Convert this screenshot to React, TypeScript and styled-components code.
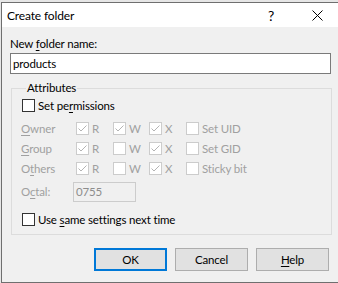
import React from "react";
import styled, { createGlobalStyle } from "styled-components";

const Global = createGlobalStyle`
  html, body {
    margin: 0;
    padding: 0;
    background: #e6e6e6;
    overflow: hidden;
  }
  body {
    width: 338px;
    height: 283px;
    font-family: Lato, "Noto Sans", sans-serif;
    font-size: 11.5px;
    letter-spacing: -0.15px;
    color: #000;
  }
`;

const Dialog = styled.div`
  display: flex;
  flex-direction: column;
  width: 338px;
  height: 279px;
  margin: 2px 0 0 1px;
  border: 1px solid #6f6f6f;
  background: #f0f0f0;
`;

const TitleBar = styled.div`
  display: flex;
  align-items: center;
  height: 24px;
  background: #fff;
  padding-left: 5px;
`;

const Title = styled.span`
  flex: 1;
  font-size: 12px;
`;

const CaptionButton = styled.span`
  width: 46px;
  height: 24px;
  display: flex;
  align-items: center;
  justify-content: center;
  font-size: 14px;
`;

const Body = styled.div`
  display: flex;
  flex-direction: column;
  padding: 9px 0 0 8px;
  width: 322px;
`;

const Label = styled.div`
  line-height: 16px;
  height: 16px;
`;

const TextInput = styled.div<{ $disabled?: boolean }>`
  box-sizing: border-box;
  height: 21px;
  border: 1px solid ${(p) => (p.$disabled ? "#cccccc" : "#7a7a7a")};
  background: ${(p) => (p.$disabled ? "#f0f0f0" : "#fff")};
  color: ${(p) => (p.$disabled ? "#8d8d8d" : "#000")};
  padding: 1px 2px;
  line-height: 17px;
`;

const NameInput = styled(TextInput)`
  margin-top: 1px;
  width: 321px;
`;

const Group = styled.fieldset`
  margin: 6px 0 0 1px;
  width: 321px;
  height: 155px;
  box-sizing: border-box;
  border: 1px solid #dcdcdc;
  padding: 0 0 0 9px;
  display: flex;
  flex-direction: column;
`;

const Legend = styled.legend`
  padding: 0 1px;
  margin-left: 5px;
  line-height: 16px;
`;

const CheckRow = styled.label`
  display: flex;
  align-items: center;
  gap: 3px;
  height: 16px;
  margin-left: 1px;
`;

const PermRow = styled(CheckRow)`
  margin-top: 1px;
`;

const Box = styled.span<{ $disabled?: boolean }>`
  box-sizing: border-box;
  width: 13px;
  height: 13px;
  border: 1px solid ${(p) => (p.$disabled ? "#cccccc" : "#333333")};
  background: #fff;
  display: inline-flex;
  align-items: center;
  justify-content: center;
  flex: none;
`;

const PermGrid = styled.div`
  display: grid;
  grid-template-columns: 55px 37px 36px 37px 1fr;
  grid-auto-rows: 20px;
  margin-top: 5px;
  color: #a0a0a0;
`;

const Cell = styled.div`
  display: flex;
  align-items: center;
  gap: 3px;
`;

const OctalRow = styled.div`
  display: flex;
  align-items: center;
  height: 21px;
  margin-top: 3px;
  color: #a0a0a0;
`;

const OctalLabel = styled.span`
  width: 52px;
`;

const OctalInput = styled(TextInput)`
  width: 63px;
  height: 20px;
  line-height: 16px;
`;

const SameRow = styled(CheckRow)`
  margin-top: 9px;
`;

const Buttons = styled.div`
  display: flex;
  gap: 8px;
  margin: 13px 0 0 84px;
`;

const Button = styled.div<{ $default?: boolean }>`
  box-sizing: border-box;
  width: 73px;
  height: 23px;
  background: #e1e1e1;
  border: ${(p) => (p.$default ? "2px solid #0078d7" : "1px solid #adadad")};
  display: flex;
  align-items: center;
  justify-content: center;
`;

const U = styled.span`
  text-decoration: underline;
  text-underline-offset: 2px;
`;

const Check: React.FC<{ checked?: boolean; disabled?: boolean }> = ({ checked, disabled }) => (
  <Box $disabled={disabled}>
    {checked && (
      <svg width="11" height="11" viewBox="0 0 11 11">
        <polyline points="1.5,5.5 4,8 9.5,2.5" fill="none" stroke={disabled ? "#b4b4b4" : "#333"} strokeWidth="1" />
      </svg>
    )}
  </Box>
);

const rows = [
  { name: <><U>O</U>wner</>, r: true, w: true, x: true, extra: "Set UID" },
  { name: <><U>G</U>roup</>, r: true, w: false, x: true, extra: "Set GID" },
  { name: <>O<U>t</U>hers</>, r: true, w: false, x: true, extra: "Sticky bit" },
];

export default function App() {
  return (
    <>
      <Global />
      <Dialog>
        <TitleBar>
          <Title>Create folder</Title>
          <CaptionButton>?</CaptionButton>
          <CaptionButton>
            <svg width="11" height="11" viewBox="0 0 11 11">
              <path d="M0.5 0.5 L10.5 10.5 M10.5 0.5 L0.5 10.5" stroke="#000" strokeWidth="1" />
            </svg>
          </CaptionButton>
        </TitleBar>
        <Body>
          <Label>
            New <U>f</U>older name:
          </Label>
          <NameInput>products</NameInput>
          <Group>
            <Legend>Attributes</Legend>
            <PermRow>
              <Check />
              <span>
                Set pe<U>r</U>missions
              </span>
            </PermRow>
            <PermGrid>
              {rows.map((row, i) => (
                <React.Fragment key={i}>
                  <Cell>
                    <span>{row.name}</span>
                  </Cell>
                  <Cell>
                    <Check disabled checked={row.r} />R
                  </Cell>
                  <Cell>
                    <Check disabled checked={row.w} />W
                  </Cell>
                  <Cell>
                    <Check disabled checked={row.x} />X
                  </Cell>
                  <Cell>
                    <Check disabled />
                    {row.extra}
                  </Cell>
                </React.Fragment>
              ))}
            </PermGrid>
            <OctalRow>
              <OctalLabel>
                O<U>c</U>tal:
              </OctalLabel>
              <OctalInput $disabled>0755</OctalInput>
            </OctalRow>
            <SameRow>
              <Check />
              <span>
                Use <U>s</U>ame settings next time
              </span>
            </SameRow>
          </Group>
          <Buttons>
            <Button $default>OK</Button>
            <Button>Cancel</Button>
            <Button>
              <span>
                <U>H</U>elp
              </span>
            </Button>
          </Buttons>
        </Body>
      </Dialog>
    </>
  );
}
